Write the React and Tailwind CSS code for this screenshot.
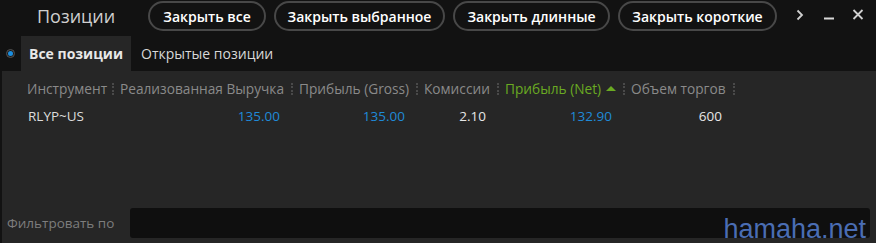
import React from "react";

const columns = [
  { title: "Инструмент", width: "w-[91px]", head: "pl-[2px]" },
  { title: "Реализованная Выручка", width: "w-[179px]", head: "pl-[4px]" },
  { title: "Прибыль (Gross)", width: "w-[125px]", head: "pl-[4px]" },
  { title: "Комиссии", width: "w-[81px]", head: "pl-[4px]" },
  { title: "Прибыль (Net)", width: "w-[126px]", head: "pl-[4px]", sorted: true },
  { title: "Объем торгов", width: "w-[110px]", head: "pl-[4px]" },
];

const row = [
  { value: "RLYP~US", color: "text-[#dcdcdc]" },
  { value: "135.00", color: "text-[#1f8ad8]" },
  { value: "135.00", color: "text-[#1f8ad8]" },
  { value: "2.10", color: "text-[#e6e6e6]" },
  { value: "132.90", color: "text-[#1f8ad8]" },
  { value: "600", color: "text-[#e6e6e6]" },
];

const Separator = () => (
  <span className="mr-[2px] inline-block h-[12px] w-[2px] border-l-2 border-dotted border-[#4a4a4a]" />
);

const PillButton = ({ width, children }) => (
  <button
    className={`${width} h-[30px] whitespace-nowrap rounded-full border-2 border-[#484848] text-center text-[14px] font-semibold text-white`}
  >
    {children}
  </button>
);

export default function App() {
  return (
    <div className="relative h-[243px] w-[876px] overflow-hidden bg-[#121212] font-['Open_Sans',sans-serif]">
      {/* header */}
      <div className="flex h-[36px] items-start pt-[1px]">
        <div className="ml-[37px] mt-[2px] w-[111px] text-[18px] text-[#cfcfcf]">Позиции</div>
        <div className="flex gap-[8px]">
          <PillButton width="w-[118px]">Закрыть все</PillButton>
          <PillButton width="w-[171px]">Закрыть выбранное</PillButton>
          <PillButton width="w-[157px]">Закрыть длинные</PillButton>
          <PillButton width="w-[159px]">Закрыть короткие</PillButton>
        </div>
        <div className="ml-[16px] mt-[7px] flex items-center">
          <svg width="10" height="14" viewBox="0 0 10 14" className="ml-[2px]">
            <path d="M2.5 2.5 L7 7 L2.5 11.5" fill="none" stroke="#cfcfcf" strokeWidth="1.8" />
          </svg>
          <svg width="12" height="14" viewBox="0 0 12 14" className="ml-[18px]">
            <rect x="1" y="9.5" width="10" height="2" fill="#d8d8d8" />
          </svg>
          <svg width="12" height="14" viewBox="0 0 12 14" className="ml-[17px]">
            <path d="M1.5 2 L10.5 11 M10.5 2 L1.5 11" stroke="#d0d0d0" strokeWidth="1.8" />
          </svg>
        </div>
      </div>

      {/* tabs */}
      <div className="flex h-[35px] items-stretch">
        <div className="flex w-[21px] items-center justify-center">
          <span className="flex h-[9px] w-[9px] items-center justify-center rounded-full border border-[#555] bg-[#1b1b1b]">
            <span className="h-[5px] w-[5px] rounded-full bg-[#1c8fe0]" />
          </span>
        </div>
        <div className="flex w-[110px] items-center justify-center bg-[#262626] text-[14px] font-bold text-[#e8e8e8]">
          Все позиции
        </div>
        <div className="flex items-center pl-[10px] text-[14px] text-[#d8d8d8]">Открытые позиции</div>
      </div>

      {/* content */}
      <div className="ml-[2px] flex h-[172px] flex-col bg-[#262626]">
        <div className="flex-1 pl-[23px] pt-[8px]">
          <div className="flex h-[20px] items-center text-[13.7px] text-[#8a8a8a]">
            {columns.map((c) => (
              <div key={c.title} className={`${c.width} ${c.head} flex items-center justify-between whitespace-nowrap`}>
                <span className="flex items-center">
                  <span className={c.sorted ? "text-[#6aaa22]" : ""}>{c.title}</span>
                  {c.sorted && (
                    <svg width="10" height="8" viewBox="0 0 10 8" className="ml-[5px]">
                      <path d="M0 6 L5 1 L10 6 Z" fill="#6aaa22" />
                    </svg>
                  )}
                </span>
                <Separator />
              </div>
            ))}
          </div>
          <div className="mt-[7px] flex h-[20px] items-center text-[13.5px]">
            {row.map((cell, i) => (
              <div
                key={i}
                className={`${columns[i].width} ${cell.color} ${i === 0 ? "pl-[3px] text-left" : "pr-[15px] text-right"}`}
              >
                {cell.value}
              </div>
            ))}
          </div>
        </div>
        <div className="flex h-[38px] items-center pb-[2px]">
          <div className="w-[128px] pl-[5px] text-[13.5px] text-[#7d7d7d]">Фильтровать по</div>
          <div className="h-[30px] w-[740px] rounded-[3px] bg-[#0f0f0f]" />
        </div>
      </div>

      <div className="absolute bottom-[-6px] right-[10px] font-['Liberation_Sans',sans-serif] text-[27px] text-[#4a6db3]">
        hamaha.net
      </div>
    </div>
  );
}
